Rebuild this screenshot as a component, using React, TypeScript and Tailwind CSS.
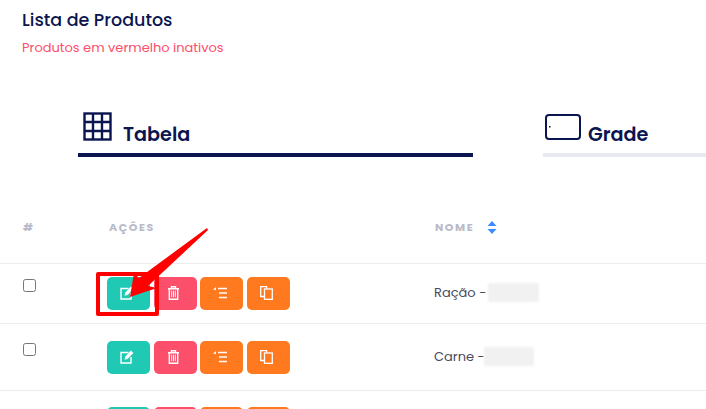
import { ReactNode } from "react";

const font = "font-['Poppins','Inter','Noto_Sans',sans-serif]";

const GridIcon = () => (
  <svg width="29" height="29" viewBox="0 0 29 29" fill="none" stroke="#0b1550" strokeWidth="2.400">
    <rect x="1.5" y="1.5" width="26" height="26" />
    <path d="M10 1.5v26M19 1.5v26M1.5 10h26M1.5 19h26" />
  </svg>
);

const TabletIcon = () => (
  <svg width="36" height="26" viewBox="0 0 36 26" fill="none" stroke="#0b1550" strokeWidth="2">
    <rect x="1" y="1" width="34" height="24" rx="3" />
    <rect x="4" y="12" width="1.5" height="1.5" fill="#0b1550" stroke="none" />
  </svg>
);

const EditIcon = () => (
  <svg width="14" height="14" viewBox="0 0 14 14" fill="none" stroke="#fff" strokeWidth="1.4">
    <path d="M8.500 2.500H1v10.500h10V7" />
    <path d="M4.500 9.800l.7-3L10.900.6l2.500 2.400-5.800 6z" fill="#fff" stroke="none" />
  </svg>
);

const TrashIcon = () => (
  <svg width="11" height="14" viewBox="0 0 11 14" fill="none" stroke="#fff" strokeWidth="1.4">
    <path d="M0 2.700h11M3.500 2.500V.8h4v1.700M1.300 2.700v10.500h8.400V2.700" />
    <path d="M3.700 4.700v6.500M5.500 4.700v6.500M7.300 4.700v6.500" strokeWidth="1" />
  </svg>
);

const ListIcon = () => (
  <svg width="14" height="12" viewBox="0 0 14 12" fill="none" stroke="#fff" strokeWidth="1.600">
    <path d="M5 1.500h9M6 6h8M6 10.500h8" />
    <path d="M0 2.200l3-2v3z" fill="#fff" stroke="none" />
  </svg>
);

const CopyIcon = () => (
  <svg width="13" height="14" viewBox="0 0 13 14" fill="none" stroke="#fff" strokeWidth="1.300">
    <path d="M4.500 10.500H.7V.7h6v2.300" />
    <rect x="4.500" y="3" width="7.800" height="10.300" />
  </svg>
);

const ActionButton = ({ color, children }: { color: string; children: ReactNode }) => (
  <button type="button" className={`flex h-[33px] w-[43px] items-center justify-center rounded-[5px] pb-[2px] pr-[4px] ${color}`}>
    {children}
  </button>
);

const Actions = () => (
  <div className="flex gap-[3.5px]">
    <ActionButton color="bg-[#1fc9b4]">
      <EditIcon />
    </ActionButton>
    <ActionButton color="bg-[#fb4f6b]">
      <TrashIcon />
    </ActionButton>
    <ActionButton color="bg-[#ff7a1f]">
      <ListIcon />
    </ActionButton>
    <ActionButton color="bg-[#ff7a1f]">
      <CopyIcon />
    </ActionButton>
  </div>
);

const Row = ({ name, blur, className }: { name?: string; blur?: string; className: string }) => (
  <div className={`flex border-t border-[#ebebf0] pl-[23px] ${className}`}>
    <div className="w-[84px]">
      <input type="checkbox" className="mt-[2px] block h-[13px] w-[13px]" />
    </div>
    <div className="w-[327px]">
      <Actions />
    </div>
    {name && (
      <div className="flex h-[31px] items-center text-[13px] text-[#4a4a5c]">
        {name} -<span className={`h-[19px] rounded-[2px] bg-[#f1f1f1] blur-[1px] ${blur}`} />
      </div>
    )}
  </div>
);

export default function App() {
  return (
    <div className={`relative h-[409px] w-[706px] overflow-hidden bg-white ${font}`}>
      <div className="pl-[22px] pt-[9px]">
        <h1 className="text-[17.5px] font-medium leading-[22px] text-[#0b1550]">Lista de Produtos</h1>
        <p className="mt-[8px] text-[13px] leading-[18px] text-[#fb4f6b]">Produtos em vermelho inativos</p>
      </div>

      <div className="mt-[54px] flex pl-[78px]">
        <div className="h-[46px] w-[395px] border-b-4 border-[#0b1550]">
          <div className="flex items-start pl-[5px] pt-[1px]">
            <GridIcon />
            <span className="ml-[11px] mt-[10px] text-[19.2px] font-semibold leading-[26px] text-[#0b1550]">Tabela</span>
          </div>
        </div>
        <div className="ml-[70px] h-[46px] flex-1 border-b-4 border-[#e9e9f0]">
          <div className="flex items-start pl-[2px] pt-[1px]">
            <div className="mt-[2px]">
              <TabletIcon />
            </div>
            <span className="ml-[7px] mt-[10px] text-[19.2px] font-semibold leading-[26px] text-[#0b1550]">Grade</span>
          </div>
        </div>
      </div>

      <div className="mt-[62px] flex h-[44px] pl-[23px] text-[11px] font-bold tracking-[1.600px] text-[#b8bac9]">
        <div className="w-[86px]">#</div>
        <div className="w-[326px]">AÇÕES</div>
        <div className="flex h-[16px] items-center gap-[13px]">
          NOME
          <svg width="10" height="13" viewBox="0 0 10 13" fill="#3f8cff">
            <path d="M5 0l4.500 5h-9zM5 13L.5 8h9z" />
          </svg>
        </div>
      </div>

      <Row name="Ração" blur="ml-[2px] w-[51px]" className="h-[60px] pt-[13px]" />
      <Row name="Carne" blur="ml-[-1px] w-[50px]" className="h-[67px] pt-[17px]" />
      <Row className="h-[40px] pt-[16px]" />

      {/* marca vermelha por cima da tabela */}
      <div className="absolute left-[96px] top-[272px] h-[44px] w-[63px] rounded-[2px] border-4 border-[#ff0000]" />
      <svg className="absolute left-[120px] top-[220px]" width="100" height="85" viewBox="0 0 100 85" fill="#ff0000">
        <path d="M87 8l1 2L28 66l9 2-27 9 4-24 5 5z" />
      </svg>
    </div>
  );
}
